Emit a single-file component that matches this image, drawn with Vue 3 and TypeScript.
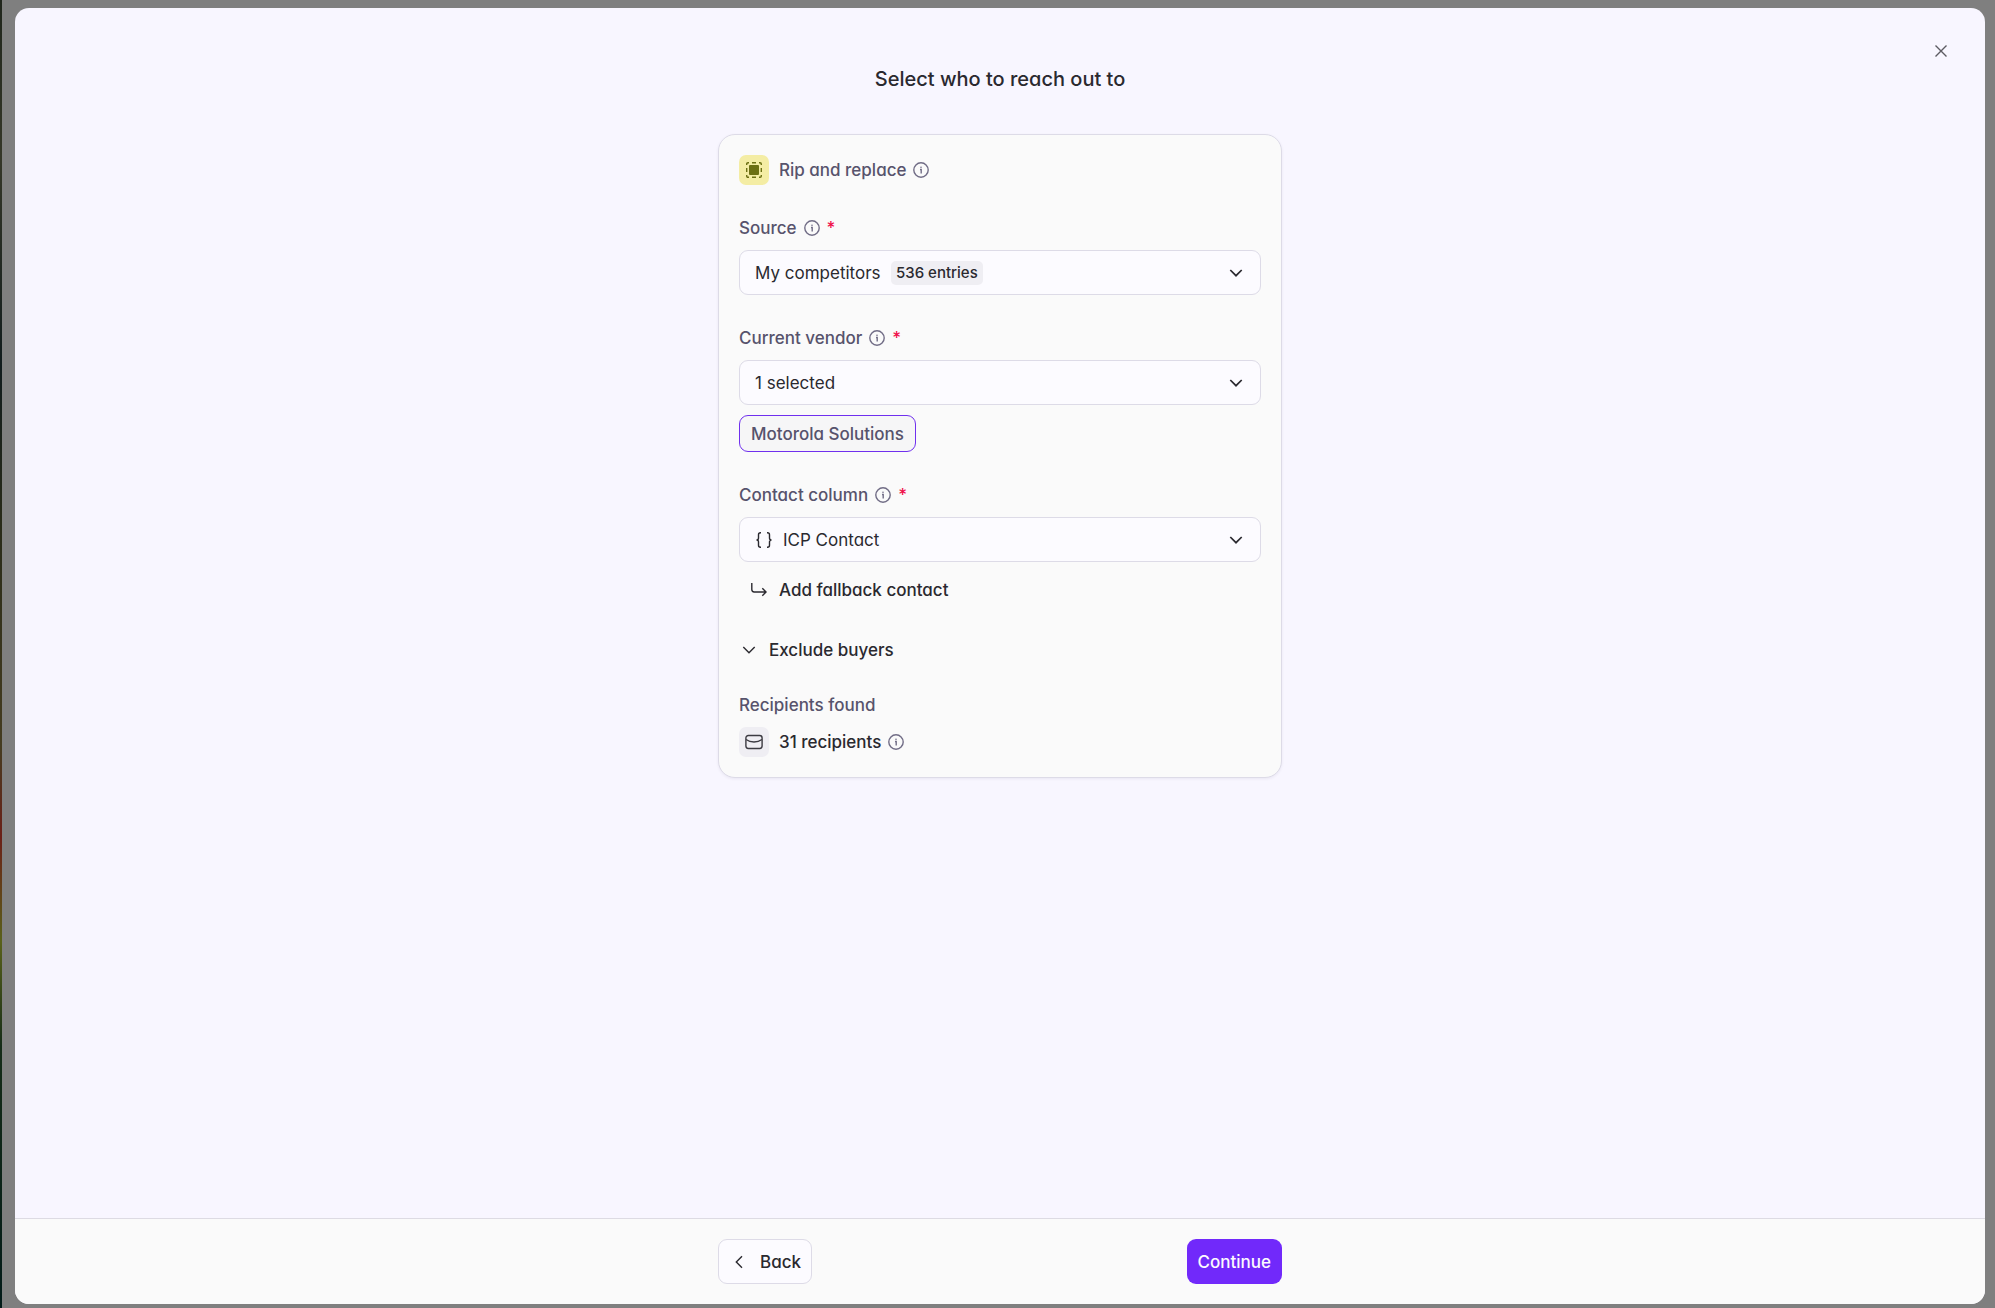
<script setup lang="ts">
import { ref } from 'vue'

interface Field {
  id: string
  label: string
  value: string
  badge?: string
  braces?: boolean
  tags: string[]
  fallback?: boolean
}

const fields = ref<Field[]>([
  { id: 'source', label: 'Source', value: 'My competitors', badge: '536 entries', tags: [] },
  { id: 'vendor', label: 'Current vendor', value: '1 selected', tags: ['Motorola Solutions'] },
  { id: 'contact', label: 'Contact column', value: 'ICP Contact', braces: true, tags: [], fallback: true },
])
</script>

<template>
  <div class="backdrop">
    <div class="photo-edge" aria-hidden="true"></div>
    <section class="modal" role="dialog" aria-labelledby="dialog-title">
      <button class="close" type="button" aria-label="Close">
        <svg viewBox="0 0 12 12" width="12" height="12"><path d="M.5.5l11 11M11.5.5l-11 11" /></svg>
      </button>
      <main class="body">
        <h1 id="dialog-title">Select who to reach out to</h1>
        <form class="card" @submit.prevent>
          <div class="play">
            <span class="chip chip-yellow">
              <svg viewBox="0 0 16 16" width="16" height="16">
                <rect class="solid" x="3" y="3" width="10" height="10" rx="1" />
                <path d="M.7 3V2Q.7.7 2 .7h1M6 .7h4M13 .7h1q1.3 0 1.3 1.3v1M15.300 6v4M15.300 13v1q0 1.300-1.300 1.300h-1M10 15.300H6M3 15.300H2Q.7 15.300.7 14v-1M.7 10V6" />
              </svg>
            </span>
            <span>Rip and replace</span>
            <svg class="info" viewBox="0 0 16 16"><circle cx="8" cy="8" r="7.200" /><path d="M7 7.500h1.200v4" /><circle class="dot" cx="8" cy="5.200" r=".8" /></svg>
          </div>

          <div v-for="field in fields" :key="field.id" class="field">
            <label :for="field.id">
              <span>{{ field.label }}</span>
              <svg class="info" viewBox="0 0 16 16"><circle cx="8" cy="8" r="7.200" /><path d="M7 7.500h1.200v4" /><circle class="dot" cx="8" cy="5.200" r=".8" /></svg>
              <span class="required">*</span>
            </label>
            <div class="control">
              <svg v-if="field.braces" class="braces" viewBox="0 0 18 16" width="18" height="16">
                <path d="M6 .8H5.500Q3.500.8 3.500 2.800v3.200Q3.500 8 1.500 8q2 0 2 2v3.200q0 2 2 2H6M12 .8h.5q2 0 2 2v3.200Q14.500 8 16.500 8q-2 0-2 2v3.200q0 2-2 2H12" />
              </svg>
              <select :id="field.id" required>
                <option>{{ field.value }}</option>
              </select>
              <span v-if="field.badge" class="badge">{{ field.badge }}</span>
              <svg class="caret" viewBox="0 0 14 8" width="14" height="8"><path d="M1.300 1L7 6.700 12.700 1" /></svg>
            </div>
            <div v-if="field.tags.length" class="tags">
              <button v-for="tag in field.tags" :key="tag" class="tag" type="button">{{ tag }}</button>
            </div>
            <button v-if="field.fallback" class="fallback" type="button">
              <svg viewBox="0 0 16 14" width="16" height="14"><path d="M.8 0v6.600q0 2.400 2.400 2.400H15M11.300 5.200L15.100 9l-3.800 3.800" /></svg>
              Add fallback contact
            </button>
          </div>

          <button class="exclude" type="button" aria-expanded="false">
            <svg viewBox="0 0 14 8" width="14" height="8"><path d="M1.300 1L7 6.700 12.700 1" /></svg>
            Exclude buyers
          </button>

          <div class="found">
            <span class="found-label">Recipients found</span>
            <div class="found-row">
              <span class="chip">
                <svg viewBox="0 0 18 16" width="18" height="16"><rect x=".9" y="1.500" width="16.200" height="13" rx="2.400" /><path d="M1 5.500q3.500 2.500 8 2.500t8-2.500" /></svg>
              </span>
              <span>31 recipients</span>
              <svg class="info" viewBox="0 0 16 16"><circle cx="8" cy="8" r="7.200" /><path d="M7 7.500h1.200v4" /><circle class="dot" cx="8" cy="5.200" r=".8" /></svg>
            </div>
          </div>
        </form>
      </main>
      <footer>
        <div class="actions">
          <button class="back" type="button">
            <svg viewBox="0 0 8 14" width="8" height="14"><path d="M7 1.300L1.300 7 7 12.700" /></svg>
            Back
          </button>
          <button class="continue" type="button">Continue</button>
        </div>
      </footer>
    </section>
  </div>
</template>

<style>
body {
  margin: 0;
}
</style>

<style scoped>
* {
  box-sizing: border-box;
}
.backdrop {
  position: relative;
  display: flex;
  min-height: 100vh;
  padding: 8px 10px 4px 15px;
  background: #7f7f7f;
  color: #2a292f;
  font-family: Inter, "Liberation Sans", sans-serif;
  font-size: 17px;
  line-height: 24px;
  font-weight: 500;
  font-feature-settings: "cv11";
}
.photo-edge {
  position: absolute;
  left: 0;
  top: 0;
  bottom: 0;
  width: 2px;
  background: linear-gradient(#20261c 0%, #353728 12%, #111c1d 28%, #292b19 40%, #453c20 57%, #6b2018 64%, #59611a 72%, #152c18 80%, #031b19 100%);
}
.modal {
  position: relative;
  display: flex;
  flex: 1;
  flex-direction: column;
  overflow: hidden;
  border-radius: 14px;
  background: #f8f6ff;
}
button,
select {
  font: inherit;
  font-feature-settings: inherit;
  color: inherit;
  margin: 0;
  padding: 0;
  border: 0;
  background: none;
  cursor: pointer;
}
svg {
  flex: none;
  fill: none;
  stroke: currentColor;
  stroke-width: 1.4;
}
.solid,
.dot {
  fill: currentColor;
  stroke: none;
}
.close {
  position: absolute;
  top: 28px;
  right: 29px;
  display: grid;
  place-items: center;
  width: 30px;
  height: 30px;
  color: #5c5b62;
}
.body {
  display: flex;
  flex: 1;
  flex-direction: column;
  align-items: center;
  padding-top: 57px;
}
h1 {
  margin: 0 0 41px;
  font-size: 20px;
  line-height: 28px;
  font-weight: 500;
}
.card {
  display: flex;
  flex-direction: column;
  width: 100%;
  max-width: 564px;
  padding: 20px;
  border: 1px solid #dddbe7;
  border-radius: 17px;
  background: #fafafa;
  box-shadow: 0 1px 3px #28205012;
}
.play,
label,
.found-label {
  color: #57536c;
}
.play,
label,
.found-row {
  display: flex;
  align-items: center;
}
.info {
  width: 16px;
  height: 16px;
  margin-left: 7px;
  color: #716d86;
}
.chip {
  display: grid;
  place-items: center;
  width: 30px;
  height: 30px;
  margin-right: 10px;
  border-radius: 7px;
  background: #efeef3;
  color: #3c3b42;
}
.chip-yellow {
  background: #f4eda4;
  color: #6c7013;
}
.field {
  display: flex;
  flex-direction: column;
  align-items: flex-start;
  margin-top: 31px;
}
label {
  margin-bottom: 10px;
}
.required {
  margin-left: 7px;
  color: #f0104c;
}
.control {
  display: flex;
  align-items: center;
  width: 100%;
  height: 45px;
  padding: 0 17px 0 15px;
  border: 1px solid #dddbe7;
  border-radius: 9px;
  background: #fcfbff;
  font-weight: 400;
}
select {
  appearance: none;
}
.braces {
  margin-right: 10px;
}
.badge {
  margin-left: 10px;
  padding: 0 5px;
  border-radius: 5px;
  background: #efeef3;
  font-size: 15px;
  line-height: 24px;
  font-weight: 500;
}
.caret {
  margin-left: auto;
  stroke-width: 1.7;
}
.tags {
  display: flex;
  margin-top: 10px;
}
.tag {
  height: 37px;
  padding: 0 11px;
  border: 1px solid #7030ee;
  border-radius: 9px;
  background: #f6f6f7;
  color: #57536c;
}
.fallback {
  display: flex;
  align-items: center;
  gap: 12px;
  margin: 16px 0 0 12px;
}
.exclude {
  display: flex;
  align-items: center;
  align-self: flex-start;
  gap: 13px;
  margin: 36px 0 31px 3px;
}
.found {
  display: flex;
  flex-direction: column;
  gap: 10px;
}
footer {
  padding: 20px;
  border-top: 1px solid #dddbe3;
  background: #fafafa;
}
.actions {
  display: flex;
  justify-content: space-between;
  max-width: 564px;
  margin: 0 auto;
}
.back,
.continue {
  display: flex;
  align-items: center;
  height: 45px;
  padding: 0 11px;
  border-radius: 9px;
}
.back {
  gap: 17px;
  padding: 0 10px 0 16px;
  border: 1px solid #dddbe7;
  background: #fcfbff;
}
.continue {
  background: #7129fa;
  color: #fcfaff;
}
</style>
